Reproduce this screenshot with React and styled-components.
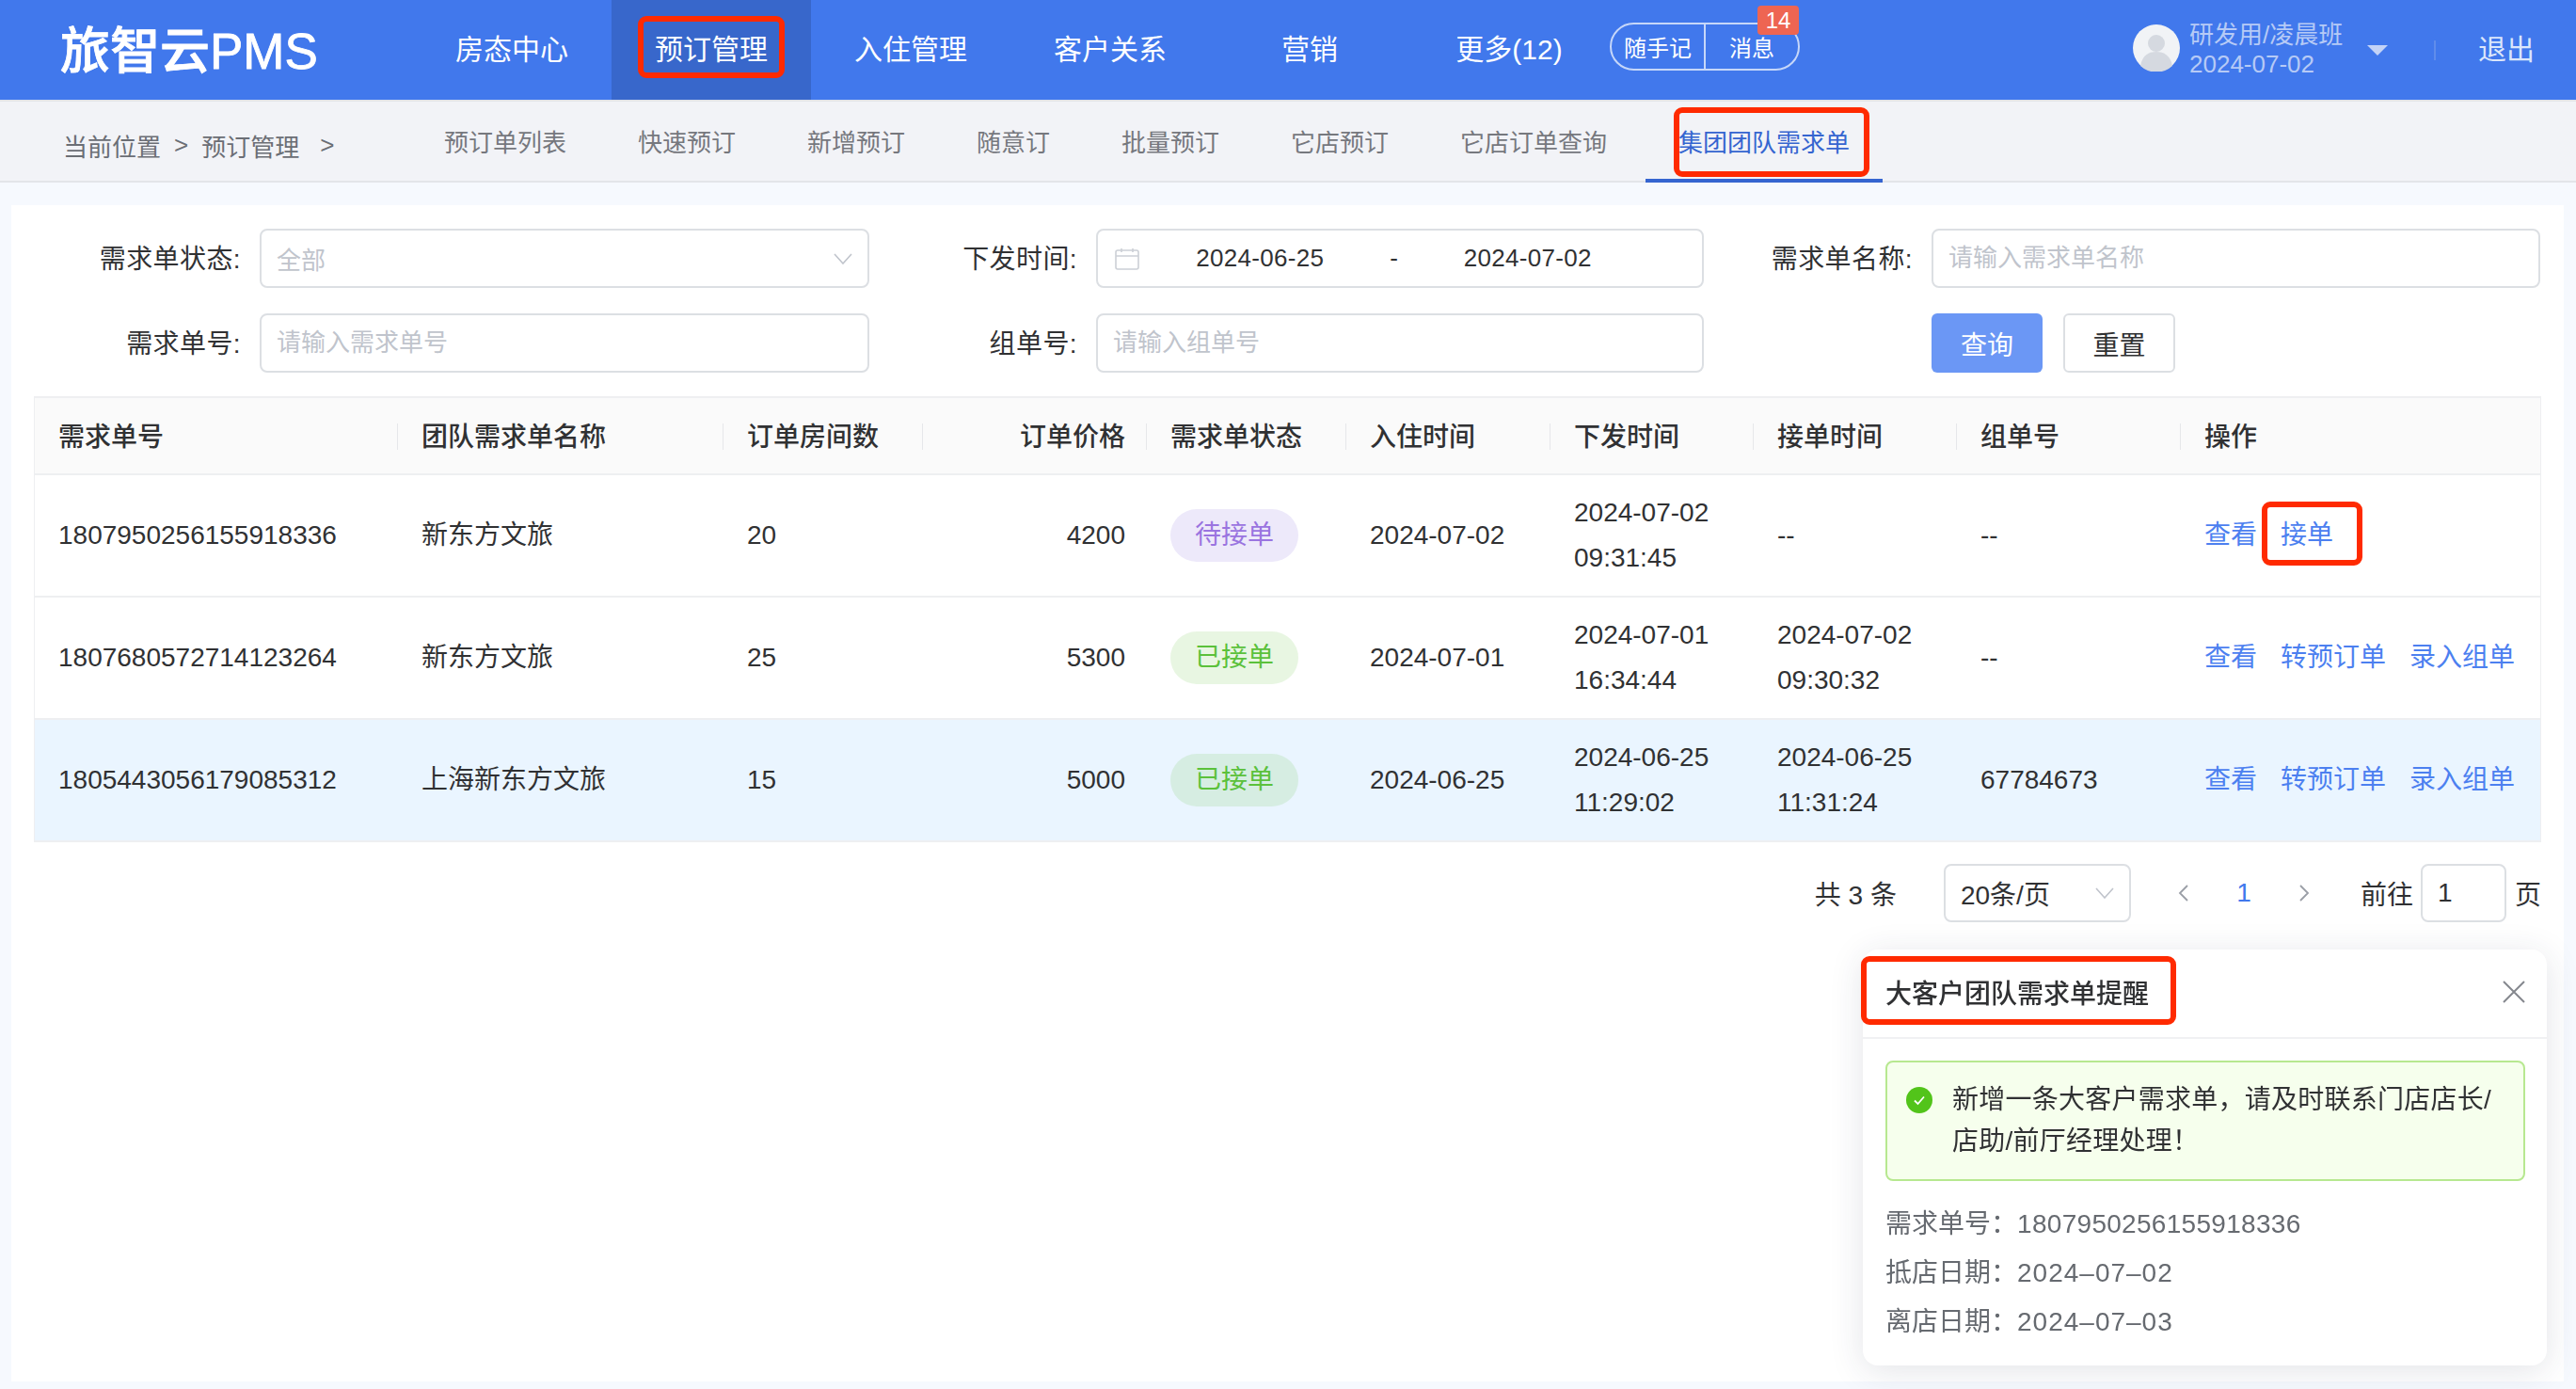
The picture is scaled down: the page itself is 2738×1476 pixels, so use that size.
import React from 'react';
import styled, { createGlobalStyle } from 'styled-components';

const GlobalStyle = createGlobalStyle`
  * { box-sizing: border-box; }
  html, body { margin: 0; padding: 0; }
  body {
    background: #f6f9fe;
    color: #303133;
    font-family: "Liberation Sans", "Noto Sans CJK SC", sans-serif;
    font-size: 28px;
  }
`;

const Page = styled.div`
  position: relative;
  width: 2738px;
  height: 1476px;
  overflow: hidden;
`;

// 红色标注框
const Callout = styled.span`
  position: relative;
  &::after {
    content: '';
    position: absolute;
    top: ${p => p.$t}px;
    bottom: ${p => p.$b}px;
    left: ${p => p.$l}px;
    right: ${p => p.$r}px;
    border: 6px solid #ff2a00;
    border-radius: 9px;
    pointer-events: none;
  }
`;

/* 顶部导航 */
const Header = styled.header`
  display: flex;
  align-items: stretch;
  height: 106px;
  background: #4178ec;
  color: #fff;
`;
const Logo = styled.div`
  display: flex;
  align-items: center;
  width: 438px;
  padding: 0 0 6px 64px;
  font-size: 53px;
  font-weight: 500;
  -webkit-text-stroke: 0.8px #fff;
  white-space: nowrap;
`;
const NavItem = styled.a`
  display: flex;
  align-items: center;
  justify-content: center;
  width: 212px;
  padding-bottom: 6px;
  font-size: 30px;
  background: ${p => (p.$active ? '#3867cb' : 'transparent')};
`;
const Pill = styled.div`
  position: relative;
  display: flex;
  align-self: flex-start;
  width: 202px;
  height: 51px;
  margin: 24px 0 0 1px;
  border: 2px solid rgba(255, 255, 255, 0.7);
  border-radius: 26px;
  font-size: 24px;
`;
const PillCell = styled.span`
  display: flex;
  align-items: center;
  justify-content: center;
  flex: 1;
  & + & { border-left: 2px solid rgba(255, 255, 255, 0.7); }
`;
const Badge = styled.span`
  position: absolute;
  top: -20px;
  right: -1px;
  display: flex;
  align-items: center;
  justify-content: center;
  width: 44px;
  height: 31px;
  background: #ee6552;
  border-radius: 4px;
  font-size: 24px;
`;
const UserBox = styled.div`
  display: flex;
  align-items: center;
  margin-left: auto;
  padding-right: 44px;
`;
const Avatar = styled.svg`
  width: 50px;
  height: 50px;
  margin-bottom: 4px;
`;
const UserText = styled.div`
  width: 165px;
  margin: 0 0 1px 10px;
  font-size: 26px;
  line-height: 31px;
  color: #b6caf6;
  white-space: nowrap;
`;
const Caret = styled.span`
  width: 0;
  height: 0;
  margin: 0 0 0 24px;
  border-left: 11px solid transparent;
  border-right: 11px solid transparent;
  border-top: 11px solid #c3d3f7;
`;
const VLine = styled.span`
  width: 2px;
  height: 21px;
  margin-left: 49px;
  background: #5f8ceb;
`;
const Logout = styled.a`
  margin-left: 45px;
  padding-bottom: 6px;
  font-size: 30px;
  color: #dbe6fb;
`;

/* 二级导航 */
const SubBar = styled.nav`
  display: flex;
  align-items: stretch;
  height: 88px;
  background: #f2f3f7;
  border-top: 2px solid #e3e5e9;
  border-bottom: 2px solid #e3e5e9;
`;
const Crumbs = styled.div`
  display: flex;
  align-items: center;
  gap: 14px;
  width: 437px;
  padding: 8px 0 0 67px;
  font-size: 26px;
  color: #6b6e75;
  white-space: nowrap;
`;
const CrumbEnd = styled.span`
  margin-left: 8px;
`;
const Tabs = styled.div`
  display: flex;
  gap: 6px;
`;
const Tab = styled.a`
  position: relative;
  display: flex;
  align-items: center;
  padding: 0 35px 2px;
  font-size: 26px;
  color: ${p => (p.$active ? '#3565d0' : '#76787e')};
  white-space: nowrap;
  ${p => p.$active && `
    &::before {
      content: '';
      position: absolute;
      left: 0;
      right: 0;
      bottom: -2px;
      height: 4px;
      background: #3565d0;
    }
  `}
`;

/* 主体 */
const Main = styled.main`
  padding: 24px 13px 0 12px;
`;
const Panel = styled.section`
  height: 1250px;
  padding: 25px 24px 0;
  background: #fff;
`;
const Form = styled.div`
  display: grid;
  grid-template-columns: 240px 648px 241px 646px 242px 647px;
  grid-auto-rows: 63px;
  row-gap: 27px;
  align-items: stretch;
`;
const Label = styled.label`
  display: flex;
  align-items: center;
  justify-content: flex-end;
  padding: 0 20px 4px 0;
  font-size: 28px;
  letter-spacing: 0.4px;
  color: #303133;
  white-space: nowrap;
`;
const Control = styled.div`
  display: flex;
  align-items: center;
  padding: ${p => p.$pad || '0 16px 0 16px'};
  border: 2px solid #dcdfe3;
  border-radius: 8px;
  background: #fff;
  font-size: 26px;
`;
const TextInput = styled.input`
  width: 100%;
  padding: 0 0 0 16px;
  border: 2px solid #dcdfe3;
  border-radius: 8px;
  outline: none;
  background: #fff;
  font: inherit;
  font-size: 26px;
  color: #303133;
  &::placeholder { color: #c0c4cc; opacity: 1; }
`;
const Muted = styled.span`
  flex: 1;
  color: #c0c4cc;
`;
const DateText = styled.span`
  flex: 1;
  text-align: center;
  letter-spacing: 0.3px;
  color: #303133;
`;
const DateDash = styled.span`
  width: 32px;
  text-align: center;
  color: #303133;
`;
const CalendarIcon = styled.svg`
  flex: none;
  width: 28px;
  height: 24px;
`;
const Chevron = styled.svg`
  flex: none;
  width: ${p => p.$w}px;
  height: ${p => p.$h}px;
`;
const Buttons = styled.div`
  display: flex;
  gap: 22px;
`;
const Button = styled.button`
  width: ${p => (p.$primary ? 118 : 119)}px;
  height: 63px;
  padding: 0;
  border: ${p => (p.$primary ? 'none' : '2px solid #dcdfe3')};
  border-radius: 6px;
  background: ${p => (p.$primary ? '#6b97f5' : '#fff')};
  color: ${p => (p.$primary ? '#fff' : '#303133')};
  font: inherit;
  font-size: 28px;
`;

/* 表格 */
const Table = styled.table`
  width: 2665px;
  margin-top: 25px;
  table-layout: fixed;
  border-collapse: separate;
  border-spacing: 0;
  border-top: 2px solid #eeeff1;
  border-left: 1px solid #eeeff1;
  border-right: 1px solid #eeeff1;
  font-size: 28px;
`;
const Th = styled.th`
  position: relative;
  height: 82px;
  padding: 0 23px 3px 25px;
  background: #fafafa;
  border-bottom: 2px solid #eeeff1;
  font-weight: 500;
  text-align: ${p => (p.$right ? 'right' : 'left')};
  color: #303133;
  white-space: nowrap;
  &:not(:last-child)::after {
    content: '';
    position: absolute;
    top: 27px;
    right: 0;
    width: 1px;
    height: 28px;
    background: #e6e7ea;
  }
`;
const Tr = styled.tr`
  background: ${p => (p.$current ? '#eaf5ff' : '#fff')};
`;
const Td = styled.td`
  height: 130px;
  padding: 0 23px 0 25px;
  border-bottom: 2px solid #eeeff1;
  text-align: ${p => (p.$right ? 'right' : 'left')};
  line-height: 48px;
  color: #303133;
  white-space: nowrap;
`;
const Status = styled.span`
  display: inline-flex;
  align-items: center;
  justify-content: center;
  width: 136px;
  height: 56px;
  border-radius: 28px;
  background: ${p => (p.$pending ? '#ede9fa' : 'rgba(103, 194, 58, 0.15)')};
  color: ${p => (p.$pending ? '#9a74e0' : '#5bc13b')};
`;
const Ops = styled.div`
  display: flex;
  gap: 25px;
  color: #4c80f0;
`;

/* 分页 */
const Pager = styled.div`
  display: flex;
  align-items: center;
  justify-content: flex-end;
  margin-top: 23px;
  font-size: 28px;
  color: #303133;
`;
const PageSize = styled(Control)`
  justify-content: space-between;
  width: 199px;
  height: 62px;
  margin-left: 50px;
  padding: 0 16px 0 16px;
  font-size: 28px;
`;
const PageCell = styled.span`
  display: flex;
  align-items: center;
  justify-content: center;
  width: 64px;
  color: #4178ec;
`;
const PageList = styled.div`
  display: flex;
  margin: 0 28px 0 24px;
`;
const PageInput = styled(Control)`
  width: 91px;
  height: 62px;
  margin: 0 9px 0 8px;
  padding: 0 0 0 16px;
  font-size: 28px;
`;

/* 右下角提醒 */
const Notice = styled.aside`
  position: fixed;
  right: 31px;
  bottom: 25px;
  width: 727px;
  height: 442px;
  background: #fff;
  border-radius: 16px;
  box-shadow: 0 6px 36px rgba(40, 50, 80, 0.13);
`;
const NoticeHead = styled.div`
  display: flex;
  align-items: center;
  justify-content: space-between;
  height: 95px;
  padding: 0 23px 4px 24px;
  border-bottom: 2px solid #f0f1f3;
  font-weight: 500;
  color: #303133;
`;
const CloseIcon = styled.svg`
  width: 24px;
  height: 24px;
`;
const NoticeBody = styled.div`
  padding: 23px 23px 0 24px;
`;
const Alert = styled.div`
  display: flex;
  gap: 21px;
  height: 128px;
  padding: 18px 24px 0 20px;
  border: 2px solid #b7e890;
  border-radius: 8px;
  background: #f6ffed;
  line-height: 44px;
  letter-spacing: 0.25px;
  color: #303133;
`;
const CheckIcon = styled.svg`
  flex: none;
  width: 28px;
  height: 28px;
  margin-top: 8px;
`;
const InfoList = styled.div`
  margin-top: 20px;
  line-height: 52px;
  color: #666a70;
`;
const InfoRow = styled.div`
  display: flex;
`;
const InfoValue = styled.span`
  letter-spacing: ${p => p.$spacing}px;
`;

const columns = [
  { title: '需求单号', w: 386 },
  { title: '团队需求单名称', w: 346 },
  { title: '订单房间数', w: 212 },
  { title: '订单价格', w: 238, right: true },
  { title: '需求单状态', w: 212 },
  { title: '入住时间', w: 217 },
  { title: '下发时间', w: 216 },
  { title: '接单时间', w: 216 },
  { title: '组单号', w: 238 },
  { title: '操作', w: 382 },
];

const rows = [
  { id: '1807950256155918336', name: '新东方文旅', rooms: 20, price: 4200, pending: true, checkin: '2024-07-02', sent: ['2024-07-02', '09:31:45'], taken: null, group: '--', ops: ['查看', '接单'] },
  { id: '1807680572714123264', name: '新东方文旅', rooms: 25, price: 5300, checkin: '2024-07-01', sent: ['2024-07-01', '16:34:44'], taken: ['2024-07-02', '09:30:32'], group: '--', ops: ['查看', '转预订单', '录入组单'] },
  { id: '1805443056179085312', name: '上海新东方文旅', rooms: 15, price: 5000, current: true, checkin: '2024-06-25', sent: ['2024-06-25', '11:29:02'], taken: ['2024-06-25', '11:31:24'], group: '67784673', ops: ['查看', '转预订单', '录入组单'] },
];

const navs = ['房态中心', '预订管理', '入住管理', '客户关系', '营销', '更多(12)'];
const tabs = ['预订单列表', '快速预订', '新增预订', '随意订', '批量预订', '它店预订', '它店订单查询', '集团团队需求单'];

const ChevronDown = () => (
  <Chevron $w={20} $h={12} viewBox="0 0 20 12" fill="none" stroke="#c0c4cc" strokeWidth="1.6">
    <path d="M1 1l9 10 9-10" />
  </Chevron>
);

const App = () => {
  return (
    <Page>
      <GlobalStyle />
      <Header>
        <Logo>旅智云PMS</Logo>
        {navs.map(it => (
          <NavItem key={it} $active={it === '预订管理'}>
            {it === '预订管理' ? <Callout $t={-11} $b={-11} $l={-18} $r={-18}>{it}</Callout> : it}
          </NavItem>
        ))}
        <Pill>
          <PillCell>随手记</PillCell>
          <PillCell>消息</PillCell>
          <Badge>14</Badge>
        </Pill>
        <UserBox>
          <Avatar viewBox="0 0 50 50">
            <circle cx="25" cy="25" r="25" fill="#f1f3f6" />
            <circle cx="25" cy="20" r="9" fill="#d5d9e0" />
            <path d="M8 44c2-11 9-15 17-15s15 4 17 15a25 25 0 0 1-34 0z" fill="#d5d9e0" />
          </Avatar>
          <UserText>
            <div>研发用/凌晨班</div>
            <div>2024-07-02</div>
          </UserText>
          <Caret />
          <VLine />
          <Logout>退出</Logout>
        </UserBox>
      </Header>

      <SubBar>
        <Crumbs>
          <span>当前位置</span>
          <span>&gt;</span>
          <span>预订管理</span>
          <CrumbEnd>&gt;</CrumbEnd>
        </Crumbs>
        <Tabs>
          {tabs.map(it => (
            <Tab key={it} $active={it === '集团团队需求单'}>
              {it === '集团团队需求单' ? <Callout $t={-17} $b={-20} $l={-5} $r={-21}>{it}</Callout> : it}
            </Tab>
          ))}
        </Tabs>
      </SubBar>

      <Main>
        <Panel>
          <Form>
            <Label>需求单状态:</Label>
            <Control>
              <Muted>全部</Muted>
              <ChevronDown />
            </Control>
            <Label>下发时间:</Label>
            <Control $pad="0 59px 0 18px">
              <CalendarIcon viewBox="0 0 28 24" fill="none" stroke="#ccd0d6" strokeWidth="1.6">
                <rect x="1" y="3" width="24" height="20" rx="2" />
                <path d="M1 9h24M7 1v4M19 1v4" />
              </CalendarIcon>
              <DateText>2024-06-25</DateText>
              <DateDash>-</DateDash>
              <DateText>2024-07-02</DateText>
            </Control>
            <Label>需求单名称:</Label>
            <TextInput placeholder="请输入需求单名称" />

            <Label>需求单号:</Label>
            <TextInput placeholder="请输入需求单号" />
            <Label>组单号:</Label>
            <TextInput placeholder="请输入组单号" />
            <span />
            <Buttons>
              <Button $primary>查询</Button>
              <Button>重置</Button>
            </Buttons>
          </Form>

          <Table>
            <colgroup>
              {columns.map(c => <col key={c.title} width={c.w} />)}
            </colgroup>
            <thead>
              <tr>
                {columns.map(c => <Th key={c.title} $right={c.right}>{c.title}</Th>)}
              </tr>
            </thead>
            <tbody>
              {rows.map(r => (
                <Tr key={r.id} $current={r.current}>
                  <Td>{r.id}</Td>
                  <Td>{r.name}</Td>
                  <Td>{r.rooms}</Td>
                  <Td $right>{r.price}</Td>
                  <Td><Status $pending={r.pending}>{r.pending ? '待接单' : '已接单'}</Status></Td>
                  <Td>{r.checkin}</Td>
                  <Td>{r.sent[0]}<br />{r.sent[1]}</Td>
                  <Td>{r.taken ? <>{r.taken[0]}<br />{r.taken[1]}</> : '--'}</Td>
                  <Td>{r.group}</Td>
                  <Td>
                    <Ops>
                      {r.ops.map(op => (
                        op === '接单'
                          ? <Callout key={op} $t={-12} $b={-8} $l={-20} $r={-31}>{op}</Callout>
                          : <span key={op}>{op}</span>
                      ))}
                    </Ops>
                  </Td>
                </Tr>
              ))}
            </tbody>
          </Table>

          <Pager>
            <span>共 3 条</span>
            <PageSize>
              <span>20条/页</span>
              <ChevronDown />
            </PageSize>
            <PageList>
              <PageCell>
                <Chevron $w={12} $h={20} viewBox="0 0 12 20" fill="none" stroke="#9a9ea6" strokeWidth="1.8">
                  <path d="M10 2l-8 8 8 8" />
                </Chevron>
              </PageCell>
              <PageCell>1</PageCell>
              <PageCell>
                <Chevron $w={12} $h={20} viewBox="0 0 12 20" fill="none" stroke="#9a9ea6" strokeWidth="1.8">
                  <path d="M2 2l8 8-8 8" />
                </Chevron>
              </PageCell>
            </PageList>
            <span>前往</span>
            <PageInput>1</PageInput>
            <span>页</span>
          </Pager>
        </Panel>
      </Main>

      <Notice>
        <NoticeHead>
          <Callout $t={-18} $b={-15} $l={-26} $r={-29}>大客户团队需求单提醒</Callout>
          <CloseIcon viewBox="0 0 24 24" fill="none" stroke="#85888e" strokeWidth="2">
            <path d="M1 1l22 22M23 1L1 23" />
          </CloseIcon>
        </NoticeHead>
        <NoticeBody>
          <Alert>
            <CheckIcon viewBox="0 0 28 28">
              <circle cx="14" cy="14" r="14" fill="#52c41a" />
              <path d="M9 14.5l3.5 3.5L19 10.5" fill="none" stroke="#fff" strokeWidth="1.8" />
            </CheckIcon>
            <div>新增一条大客户需求单，请及时联系门店店长/店助/前厅经理处理！</div>
          </Alert>
          <InfoList>
            <InfoRow>需求单号：<InfoValue $spacing={0.3}>1807950256155918336</InfoValue></InfoRow>
            <InfoRow>抵店日期：<InfoValue $spacing={1}>2024–07–02</InfoValue></InfoRow>
            <InfoRow>离店日期：<InfoValue $spacing={1}>2024–07–03</InfoValue></InfoRow>
          </InfoList>
        </NoticeBody>
      </Notice>
    </Page>
  );
};

export default App;
